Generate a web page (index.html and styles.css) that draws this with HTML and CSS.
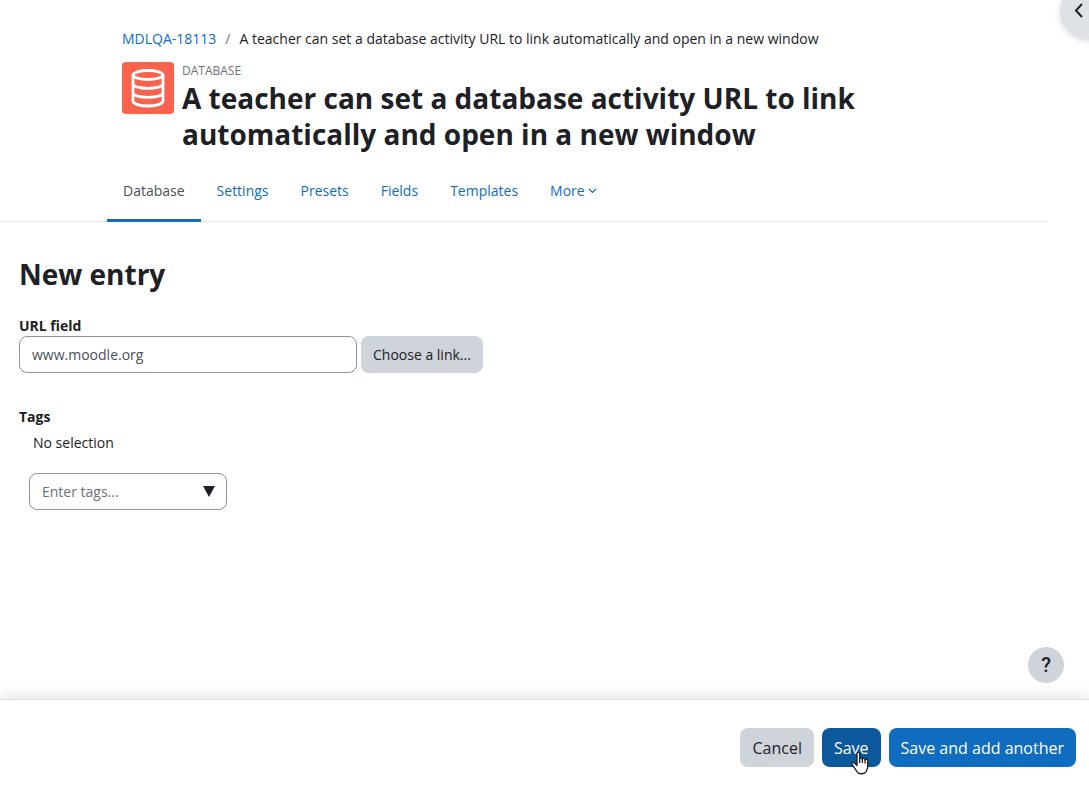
FILE: index.html
```html
<!DOCTYPE html>
<html lang="en">
<head>
<meta charset="utf-8">
<meta name="viewport" content="width=device-width, initial-scale=1">
<title>New entry</title>
<link rel="stylesheet" href="styles.css">
</head>
<body>
<div class="page">
  <button class="drawer-toggle" type="button" aria-label="Open block drawer">
    <svg width="10" height="16" viewBox="0 0 10 16" fill="none" stroke="currentColor" stroke-width="2"><path d="M8 1 2 7.500l6 6.500"/></svg>
  </button>
  <header class="header">
    <nav class="breadcrumb" aria-label="Breadcrumb">
      <a href="#">MDLQA-18113</a>
      <span class="separator">/</span>
      <span>A teacher can set a database activity URL to link automatically and open in a new window</span>
    </nav>
    <div class="activity">
      <div class="activity-icon">
        <svg width="36" height="40" viewBox="0 0 36 40" fill="none" stroke="#fff" stroke-width="2.8"><ellipse cx="18" cy="7" rx="15" ry="4.500"/><path d="M3 7v26c0 2.800 6.700 5 15 5s15-2.200 15-5V7M3 16c0 2.500 6.700 4.300 15 4.300s15-1.800 15-4.300M3 25c0 2.500 6.700 4.300 15 4.300s15-1.800 15-4.300"/></svg>
      </div>
      <div class="activity-text">
        <div class="activity-type">Database</div>
        <h1 class="heading">A teacher can set a database activity URL to link automatically and open in a new window</h1>
      </div>
    </div>
  </header>
  <nav class="tabs" aria-label="Activity">
    <a class="tab tab-active" href="#" aria-current="page">Database</a>
    <a class="tab" href="#">Settings</a>
    <a class="tab" href="#">Presets</a>
    <a class="tab" href="#">Fields</a>
    <a class="tab" href="#">Templates</a>
    <a class="tab" href="#">More <svg class="chevron" width="9" height="6" viewBox="0 0 9 6" fill="none" stroke="currentColor" stroke-width="1.2"><path d="m1 1 3.500 3.500L8 1"/></svg></a>
  </nav>
  <main class="main">
    <h2 class="heading">New entry</h2>
    <div class="field">
      <label class="label" for="url">URL field</label>
      <div class="field-row">
        <input class="input url-input" id="url" type="text" value="www.moodle.org">
        <button class="button button-secondary" type="button">Choose a link...</button>
      </div>
    </div>
    <div class="field">
      <label class="label" for="tags">Tags</label>
      <div class="selection">No selection</div>
      <div class="tag-picker">
        <input class="input tag-input" id="tags" type="text" placeholder="Enter tags...">
        <svg class="tag-arrow" width="12" height="11" viewBox="0 0 12 11" fill="currentColor"><path d="M0 0h12L6 11z"/></svg>
      </div>
    </div>
  </main>
  <footer class="footer">
    <button class="help" type="button" aria-label="Help">?</button>
    <button class="button button-large button-secondary" type="button">Cancel</button>
    <div class="save-wrap">
      <button class="button button-large button-hover" type="button">Save</button>
      <svg class="pointer" width="18" height="24" viewBox="0 0 18 24" fill="#fff" stroke="#1b1b2b" stroke-width="1.300" stroke-linejoin="round" stroke-linecap="round"><path d="M6 14V2.500C6 .6 8.700.6 8.700 2.500V8c0-1.500 2.700-1.500 2.700.4 0-1.500 2.700-1.300 2.700.5 0-1.400 2.600-1.200 2.600.7v6.200c0 2-1.200 2.800-1.200 4.500-1.800 3.200-7.700 3.200-9.500.5-.9-2.300-3.200-4.300-4.700-6.900-1.300-2.200 1-3.300 2.400-1.700L6 14.500"/><path d="M8.700 8v3.500M11.400 8.500v3M14.100 9v3"/></svg>
    </div>
    <button class="button button-large button-primary" type="button">Save and add another</button>
  </footer>
</div>
</body>
</html>
```
FILE: styles.css
```css
* {
  box-sizing: border-box;
}

body {
  margin: 0;
  background: #fff;
  color: #1d2125;
  font: 14px/22px "Open Sans", "Noto Sans", sans-serif;
}

a {
  color: #0f6cbf;
  text-decoration: none;
}

.page {
  position: relative;
  display: flex;
  flex-direction: column;
  min-height: 100vh;
  overflow-x: clip;
}

.drawer-toggle {
  position: absolute;
  top: -17px;
  right: -27px;
  width: 56px;
  height: 56px;
  padding: 0 0 0 14px;
  border: 0;
  border-radius: 50%;
  background: #dee2e6;
  color: #1d2125;
  box-shadow: 0 2px 6px rgba(0, 0, 0, 0.15);
  text-align: left;
}

.drawer-toggle svg {
  display: block;
}

.header {
  padding: 28px 180px 0 122px;
}

.breadcrumb {
  display: flex;
  gap: 9px;
}

.separator,
.activity-type {
  color: #6a737b;
}

.activity {
  display: flex;
  gap: 8px;
  margin-top: 12px;
}

.activity-icon {
  display: flex;
  flex: none;
  align-items: center;
  justify-content: center;
  width: 52px;
  height: 52px;
  border-radius: 4px;
  background: #f7634d;
}

.activity-type {
  font-size: 12px;
  line-height: 18px;
  text-transform: uppercase;
}

.heading {
  margin: 0;
  font-size: 28px;
  font-weight: 700;
  line-height: 36px;
}

.tabs {
  display: flex;
  margin: 8px 41px 0 0;
  padding-left: 107px;
  border-bottom: 1px solid #dee2e6;
}

.tab {
  margin-bottom: -1px;
  padding: 20px 16px 17px;
  border-bottom: 3px solid transparent;
}

.tab-active {
  border-color: #0f6cbf;
  color: #495057;
}

.chevron {
  vertical-align: 2px;
}

.main {
  flex: 1;
  padding: 34px 19px;
}

.field {
  margin-top: 24px;
}

.field + .field {
  margin-top: 34px;
}

.label {
  display: block;
  font-weight: 700;
  line-height: 20px;
}

.field-row {
  display: flex;
  gap: 4px;
}

.input {
  height: 37px;
  padding: 0 12px;
  border: 1px solid #8f959e;
  border-radius: 8px;
  background: #fff;
  color: #495057;
  font: inherit;
}

.input::placeholder {
  color: #6a737b;
  opacity: 1;
}

.url-input {
  width: 338px;
}

.selection {
  padding: 5px 14px 4px;
}

.tag-picker {
  position: relative;
  width: 198px;
  margin: 15px 10px;
}

.tag-input {
  width: 100%;
}

.tag-arrow {
  position: absolute;
  top: 13px;
  right: 12px;
}

.button {
  height: 37px;
  padding: 0 12px;
  border: 0;
  border-radius: 8px;
  font: inherit;
  white-space: nowrap;
}

.button-large {
  height: 39px;
  font-size: 16px;
}

.button-secondary {
  background: #ced4da;
  color: #1d2125;
}

.button-primary {
  background: #0f6cbf;
  color: #fff;
}

.button-hover {
  background: #0c589c;
  color: #fff;
}

.footer {
  position: sticky;
  bottom: 0;
  display: flex;
  justify-content: flex-end;
  gap: 8px;
  padding: 28px 13px 20px;
  border-top: 1px solid #dee2e6;
  background: #fff;
  box-shadow: 0 0 16px rgba(0, 0, 0, 0.15);
}

.save-wrap {
  position: relative;
}

.pointer {
  position: absolute;
  top: 23px;
  left: 29px;
}

.help {
  position: absolute;
  top: -53px;
  right: 25px;
  width: 36px;
  height: 36px;
  padding: 0;
  border: 0;
  border-radius: 50%;
  background: #ced4da;
  color: #1d2125;
  font: 500 20px/36px Roboto, sans-serif;
}
```
